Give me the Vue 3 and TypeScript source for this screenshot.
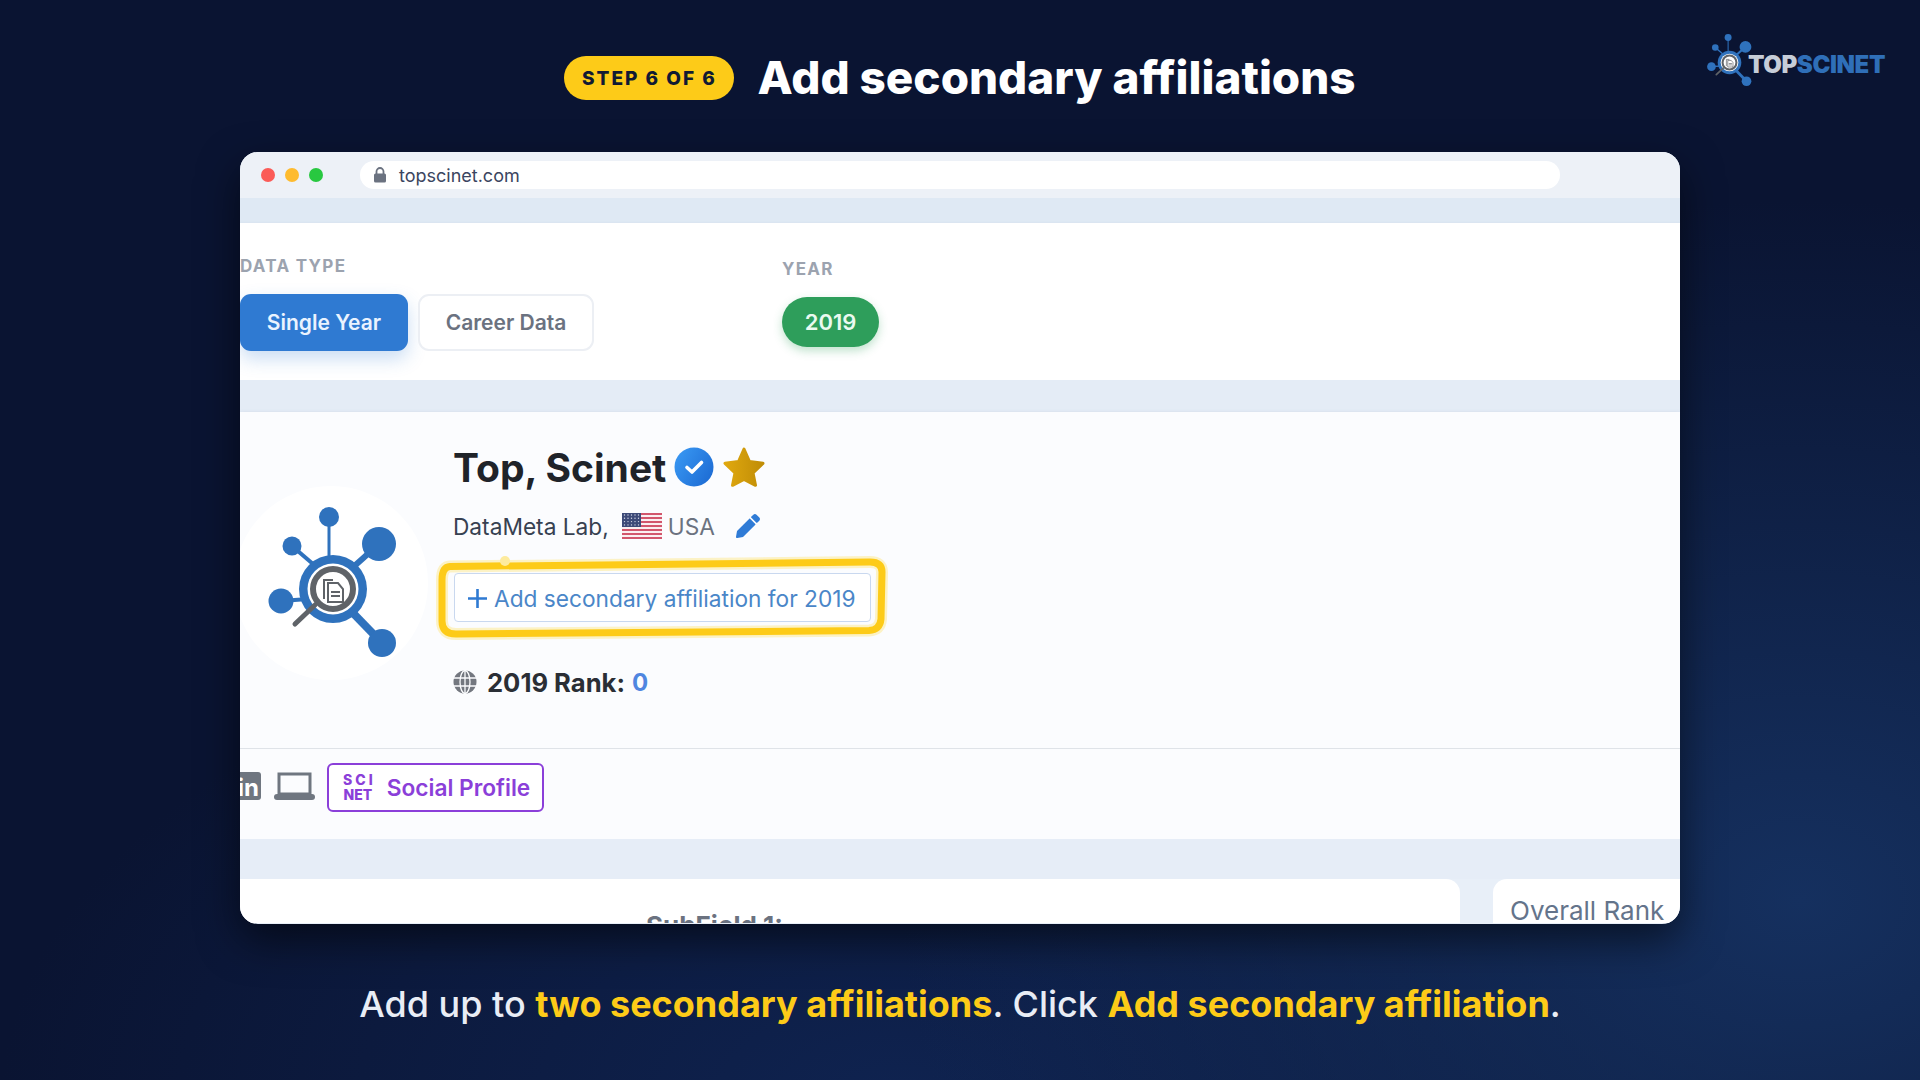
<script setup lang="ts">
// 底部说明文字分段，高亮部分用黄色
interface CaptionPart {
  text: string
  hl: boolean
}
const captionParts: CaptionPart[] = [
  { text: 'Add up to ', hl: false },
  { text: 'two secondary affiliations', hl: true },
  { text: '. Click ', hl: false },
  { text: 'Add secondary affiliation', hl: true },
  { text: '.', hl: false },
]
const flagStripes = [0, 2, 4, 6, 8, 10, 12]
// 国旗左上角的星点
const flagStars: Array<[number, number]> = []
for (let r = 0; r < 4; r++) {
  for (let c = 0; c < 5; c++) {
    flagStars.push([2.5 + c * 3.5, 2 + r * 3.3])
  }
}
</script>

<template>
  <div class="page">
    <svg class="defs" width="0" height="0">
      <symbol id="network" viewBox="-10 -10 170 170">
        <g stroke="#2f72bd" fill="none">
          <line x1="71" y1="3" x2="71" y2="50" stroke-width="3" />
          <line x1="34" y1="32" x2="55" y2="50" stroke-width="4" />
          <line x1="121" y1="30" x2="93" y2="55" stroke-width="6" />
          <line x1="23" y1="87" x2="50" y2="85" stroke-width="4" />
          <line x1="124" y1="129" x2="94" y2="98" stroke-width="8" />
        </g>
        <g fill="#2f72bd">
          <circle cx="71" cy="3" r="10" />
          <circle cx="34" cy="32" r="9.5" />
          <circle cx="121" cy="30" r="17" />
          <circle cx="23" cy="87" r="12.5" />
          <circle cx="124" cy="129" r="14" />
          <circle cx="75" cy="75" r="34" />
        </g>
        <circle cx="75" cy="75" r="25.5" fill="#fff" />
        <circle cx="75" cy="75" r="20" fill="#fff" stroke="#5f6368" stroke-width="6" />
        <line x1="57" y1="91" x2="37" y2="110" stroke="#5f6368" stroke-width="5" stroke-linecap="round" />
        <path d="M66 85V66h9M70 88V69h10l5 6v13z" fill="#fff" stroke="#5f6368" stroke-width="2" />
        <path d="M73 78h9M73 82h9" stroke="#5f6368" stroke-width="2" />
      </symbol>
    </svg>

    <div class="brand">
      <svg width="59" height="59"><use href="#network" /></svg>
      <span class="brand__text"><span class="brand__top">TOP</span>SCINET</span>
    </div>

    <header class="head">
      <span class="head__badge">STEP 6 OF 6</span>
      <h1 class="head__title">Add secondary affiliations</h1>
    </header>

    <section class="win">
      <div class="win__bar">
        <span class="dot dot--red"></span>
        <span class="dot dot--amber"></span>
        <span class="dot dot--green"></span>
        <div class="url">
          <svg class="url__lock" width="14" height="16" viewBox="0 0 14 16">
            <path d="M3.5 7V4.5a3.5 3.5 0 0 1 7 0V7" fill="none" stroke="#6b7280" stroke-width="1.8" />
            <rect x="1" y="6.5" width="12" height="9" rx="1.5" fill="#6b7280" />
          </svg>
          <span>topscinet.com</span>
        </div>
      </div>

      <div class="win__body">
        <div class="band band--top"></div>

        <div class="filters">
          <div class="filters__type">
            <div class="filters__label filters__label--type">DATA TYPE</div>
            <div class="filters__btns">
              <button class="btn btn--on">Single Year</button>
              <button class="btn">Career Data</button>
            </div>
          </div>
          <div class="filters__year">
            <div class="filters__label">YEAR</div>
            <button class="year-pill">2019</button>
          </div>
        </div>

        <div class="band band--mid"></div>

        <div class="profile">
          <div class="profile__main">
            <div class="avatar">
              <svg width="170" height="170"><use href="#network" /></svg>
            </div>
            <div class="info">
              <div class="info__name">
                <span>Top, Scinet</span>
                <svg class="info__check" width="40" height="40" viewBox="0 0 40 40">
                  <defs>
                    <linearGradient id="checkFill" x1="0" y1="0" x2="1" y2="0.6">
                      <stop offset="0" stop-color="#3b9bf5" />
                      <stop offset="1" stop-color="#1f6fd6" />
                    </linearGradient>
                  </defs>
                  <circle cx="20" cy="20" r="19.5" fill="url(#checkFill)" />
                  <path d="M13 20.5l5 4.500L27.500 15.500" fill="none" stroke="#fff" stroke-width="3.6" stroke-linecap="round" stroke-linejoin="round" />
                </svg>
                <svg class="info__star" width="42" height="40" viewBox="0 0 42 40">
                  <defs>
                    <linearGradient id="starFill" x1="0" y1="0" x2="1" y2="0">
                      <stop offset="0" stop-color="#e0a80f" />
                      <stop offset="1" stop-color="#c08d06" />
                    </linearGradient>
                  </defs>
                  <path d="M21 2l5.500 12.500 13.500 1.800-10 9.500 2.500 12.500L21 32.500 9.500 38.300 12 25.800l-10-9.500 13.500-1.800z" fill="url(#starFill)" stroke="url(#starFill)" stroke-width="3" stroke-linejoin="round" />
                </svg>
              </div>

              <div class="info__org">
                <span class="info__lab">DataMeta Lab,</span>
                <svg class="info__flag" width="40" height="26" viewBox="0 0 40 26">
                  <rect width="40" height="26" rx="2" fill="#fbeef0" />
                  <rect v-for="y in flagStripes" :key="y" x="0" :y="y * 2" width="40" height="2" fill="#d2566c" />
                  <rect width="19" height="14" fill="#3d4a78" />
                  <circle v-for="(s, i) in flagStars" :key="i" :cx="s[0]" :cy="s[1]" r="0.7" fill="#d5d9e8" />
                </svg>
                <span class="info__country">USA</span>
                <svg class="info__pencil" width="24" height="24" viewBox="0 0 512 512">
                  <path fill="#2f7bd6" d="M497.900 142.100l-46.100 46.100c-4.700 4.700-12.300 4.700-17 0l-111-111c-4.700-4.700-4.700-12.300 0-17l46.100-46.100c18.700-18.700 49.100-18.700 67.900 0l60.100 60.100c18.800 18.700 18.800 49.100 0 67.900zM284.200 99.800L21.600 362.400.4 483.900c-2.900 16.400 11.400 30.600 27.800 27.800l121.500-21.300 262.600-262.600c4.700-4.700 4.700-12.300 0-17l-111-111c-4.800-4.700-12.400-4.700-17.100 0z" />
                </svg>
              </div>

              <div class="affil">
                <button class="affil__btn">
                  <svg class="affil__plus" width="19" height="19" viewBox="0 0 19 19">
                    <path d="M9.500 0v19M0 9.500h19" stroke="#2f7ad2" stroke-width="2.600" />
                  </svg>
                  <span>Add secondary affiliation for 2019</span>
                </button>
                <svg class="affil__mark" width="417" height="49" viewBox="0 0 417 49">
                  <path class="affil__glow" d="M-4-6.500L416-11Q428-11 428-1L427 46Q426 57 415 57.500L2 61Q-12 61-12 48L-12 7Q-12-6-4-6.500Z" />
                  <path class="affil__line" d="M-4-6.500L416-11Q428-11 428-1L427 46Q426 57 415 57.500L2 61Q-12 61-12 48L-12 7Q-12-6-4-6.500Z" />
                  <circle cx="51" cy="-12" r="5" fill="#fdeb9e" />
                </svg>
              </div>

              <div class="info__rank">
                <svg width="24" height="24" viewBox="0 0 24 24">
                  <circle cx="12" cy="12" r="11.500" fill="#73777f" />
                  <g fill="none" stroke="#fbfcfe" stroke-width="1.300">
                    <ellipse cx="12" cy="12" rx="5" ry="11.500" />
                    <path d="M12 0v24M1 8h22M1 16h22" />
                  </g>
                </svg>
                <span class="info__rank-label">2019 Rank:</span>
                <span class="info__rank-val">0</span>
              </div>
            </div>
          </div>

          <div class="social">
            <span class="social__in">in</span>
            <svg class="social__laptop" width="41" height="28" viewBox="0 0 41 28">
              <rect x="5" y="2" width="31" height="20" fill="none" stroke="#6f7680" stroke-width="3" />
              <rect x="0" y="22" width="41" height="6" rx="3" fill="#6f7680" />
            </svg>
            <a class="social__link">
              <span class="social__logo"><span class="social__sci">SCI</span><span>NET</span></span>
              <span>Social Profile</span>
            </a>
          </div>
        </div>

        <div class="band band--low"></div>

        <div class="cards">
          <div class="card card--wide"><span class="card__sub">SubField 1:</span></div>
          <div class="card card--rank"><span class="card__rank">Overall Rank</span></div>
        </div>
      </div>
    </section>

    <p class="caption">
      <template v-for="(p, i) in captionParts" :key="i">
        <span :class="{ caption__hl: p.hl }">{{ p.text }}</span>
      </template>
    </p>
  </div>
</template>

<style>
html,
body {
  margin: 0;
  background: #0a1433;
}
</style>

<style scoped>
.page {
  position: relative;
  width: 1920px;
  height: 1080px;
  overflow: hidden;
  font-family: Inter, "Liberation Sans", sans-serif;
  background:
    radial-gradient(900px 700px at 1800px 900px, #15305f 0%, rgba(21, 48, 95, 0) 100%),
    radial-gradient(900px 500px at 900px 1100px, #0f2350 0%, rgba(15, 35, 80, 0) 100%),
    #0a1432;
}
.defs {
  position: absolute;
}

.brand {
  position: absolute;
  left: 1700px;
  top: 33px;
  display: flex;
  align-items: center;
}
.brand__text {
  margin-left: -11px;
  margin-top: 3px;
  font-size: 24px;
  font-weight: 900;
  letter-spacing: -0.4px;
  color: #2f6fb8;
}
.brand__top {
  color: #c6cdd8;
}

.head {
  display: flex;
  align-items: center;
  justify-content: center;
  height: 156px;
  gap: 23px;
}
.head__badge {
  display: flex;
  align-items: center;
  justify-content: center;
  width: 170px;
  height: 44px;
  border-radius: 22px;
  background: #fdcb18;
  color: #111a33;
  font-size: 19px;
  font-weight: 800;
  letter-spacing: 2px;
}
.head__title {
  margin: -2px 0 0;
  font-size: 45.800px;
  font-weight: 800;
  color: #fff;
  letter-spacing: 0;
}

.win {
  width: 1440px;
  height: 772px;
  margin: -4px 0 0 240px;
  border-radius: 18px;
  overflow: hidden;
  background: #e8eff8;
  box-shadow: 0 16px 40px rgba(0, 0, 0, 0.55);
}
.win__bar {
  display: flex;
  align-items: center;
  height: 46px;
  padding-left: 21px;
  background: #edf1f7;
  box-sizing: border-box;
}
.dot {
  width: 14px;
  height: 14px;
  border-radius: 50%;
  margin-right: 10px;
}
.dot--red {
  background: #fb5b57;
}
.dot--amber {
  background: #febb2e;
}
.dot--green {
  background: #28c840;
}
.url {
  display: flex;
  align-items: center;
  gap: 12px;
  width: 1200px;
  height: 28px;
  margin-left: 27px;
  padding-left: 13px;
  box-sizing: border-box;
  border-radius: 14px;
  background: #fff;
  color: #3b4560;
  font-size: 18px;
}

.band--top {
  height: 25px;
  background: #dfe9f4;
}
.band--mid {
  height: 32px;
  background: #e4ecf6;
}
.band--low {
  height: 40px;
  background: #e6edf7;
}

.filters {
  display: flex;
  height: 157px;
  background: #fff;
  box-shadow: 0 1px 3px rgba(100, 116, 139, 0.18);
}
.filters__type {
  width: 542px;
  padding-top: 33px;
  box-sizing: border-box;
}
.filters__year {
  padding-top: 36px;
}
.filters__label {
  font-size: 17px;
  line-height: 20px;
  font-weight: 700;
  letter-spacing: 1.3px;
  color: #9ca3af;
}
.filters__btns {
  display: flex;
  gap: 10px;
  margin-top: 18px;
}
.btn {
  width: 176px;
  height: 57px;
  border: 2px solid #eceff4;
  border-radius: 11px;
  background: #fff;
  color: #6b7280;
  font-family: inherit;
  font-size: 21px;
  font-weight: 600;
  padding: 0;
}
.btn--on {
  width: 168px;
  border: none;
  background: #2f7ad2;
  color: #eaf3ff;
  box-shadow: 0 8px 18px rgba(47, 122, 210, 0.25);
}
.year-pill {
  display: block;
  width: 97px;
  height: 50px;
  margin-top: 18px;
  border: none;
  border-radius: 25px;
  background: #2e9e5b;
  color: #eafaf0;
  font-family: inherit;
  font-size: 22px;
  font-weight: 600;
  padding: 0;
  box-shadow: 0 4px 10px rgba(46, 158, 91, 0.3);
}

.profile {
  background: #fbfcfe;
  box-shadow: 0 1px 4px rgba(100, 116, 139, 0.2);
}
.profile__main {
  display: flex;
  height: 337px;
  box-sizing: border-box;
  border-bottom: 1px solid #dfe3e8;
}
.avatar {
  display: flex;
  align-items: center;
  justify-content: center;
  flex: none;
  width: 194px;
  height: 194px;
  padding: 12px 0 0 4px;
  box-sizing: border-box;
  margin: 74px 25px 0 -6px;
  border-radius: 50%;
  background: #fff;
}
.info {
  padding-top: 33px;
}
.info__name {
  display: flex;
  align-items: center;
  height: 44px;
  font-size: 39px;
  font-weight: 700;
  color: #1f2329;
}
.info__check {
  margin-left: 8px;
}
.info__star {
  margin-left: 9px;
}
.info__org {
  display: flex;
  align-items: center;
  height: 32px;
  margin-top: 21px;
  font-size: 22.700px;
  color: #374151;
}
.info__flag {
  margin-left: 13px;
}
.info__country {
  margin-left: 6px;
  color: #6b7280;
}
.info__pencil {
  margin-left: 21px;
}
.affil {
  position: relative;
  width: 417px;
  height: 49px;
  margin-top: 31px;
  margin-left: 1px;
}
.affil__btn {
  display: flex;
  align-items: center;
  gap: 7px;
  width: 100%;
  height: 100%;
  padding: 1px 0 0 13px;
  box-sizing: border-box;
  border: 1px solid #c9d8ef;
  border-radius: 4px;
  background: #fff;
  color: #4a86c8;
  font-family: inherit;
  font-size: 22.700px;
}
.affil__plus {
  flex: none;
}
.affil__mark {
  position: absolute;
  left: 0;
  top: 0;
  overflow: visible;
  pointer-events: none;
}
.affil__glow {
  fill: none;
  stroke: #fdeb9e;
  stroke-width: 12;
  opacity: 0.6;
}
.affil__line {
  fill: none;
  stroke: #fdcb18;
  stroke-width: 7;
}
.info__rank {
  display: flex;
  align-items: center;
  height: 32px;
  margin-top: 44px;
  font-size: 25.600px;
  font-weight: 700;
  color: #2a2e35;
}
.info__rank-label {
  margin-left: 10px;
}
.info__rank-val {
  margin-left: 7px;
  font-size: 24px;
  color: #4f86e0;
}

.social {
  display: flex;
  align-items: flex-start;
  height: 90px;
  padding-top: 14px;
  box-sizing: border-box;
}
.social__in {
  display: flex;
  align-items: flex-end;
  justify-content: flex-end;
  width: 28px;
  height: 28px;
  margin: 9px 0 0 -7px;
  padding-right: 2px;
  box-sizing: border-box;
  border-radius: 3px;
  background: #6f7680;
  color: #fff;
  font-size: 24px;
  line-height: 25px;
  font-weight: 700;
}
.social__laptop {
  margin: 9px 0 0 13px;
}
.social__link {
  display: flex;
  align-items: center;
  gap: 14px;
  width: 217px;
  height: 49px;
  margin-left: 12px;
  padding-left: 14px;
  box-sizing: border-box;
  border: 2px solid #8b3fd9;
  border-radius: 6px;
  background: #fff;
  color: #8b3fd9;
  font-size: 22.700px;
  font-weight: 600;
}
.social__logo {
  display: flex;
  flex-direction: column;
  align-items: center;
  margin-top: -2px;
  font-size: 14px;
  line-height: 15px;
  font-weight: 800;
}
.social__sci {
  letter-spacing: 3px;
  margin-right: -3px;
}

.cards {
  display: flex;
  gap: 33px;
  height: 44px;
}
.card {
  background: #fff;
  overflow: hidden;
}
.card--wide {
  width: 1220px;
  border-radius: 0 14px 0 0;
  padding-left: 406px;
  box-sizing: border-box;
}
.card--rank {
  flex: 1;
  border-radius: 14px 0 0 0;
  padding-left: 17px;
}
.card__sub {
  display: block;
  margin-top: 31px;
  font-size: 26px;
  font-weight: 700;
  color: #6b7280;
}
.card__rank {
  display: block;
  margin-top: 16px;
  font-size: 26px;
  line-height: 32px;
  white-space: nowrap;
  color: #64748b;
}

.caption {
  margin: 55px 0 0;
  text-align: center;
  font-size: 36px;
  line-height: 50px;
  font-weight: 500;
  color: #e9edf5;
}
.caption__hl {
  font-weight: 700;
  color: #fdcb18;
}
</style>
